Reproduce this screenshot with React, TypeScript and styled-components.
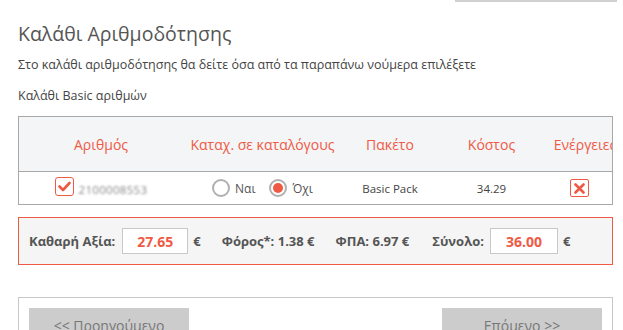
import React from "react";
import styled, { createGlobalStyle } from "styled-components";

const Global = createGlobalStyle`
  html, body { margin: 0; padding: 0; background: #fff; }
  body { font-family: "Open Sans", "Noto Sans", sans-serif; color: #555; }
  * { box-sizing: border-box; }
`;

const RED = "#ef5a45";

const Page = styled.div`
  width: 623px;
  height: 330px;
  overflow: hidden;
  padding: 0 10px 0 18px;
`;

const TopRow = styled.div`
  display: flex;
  justify-content: flex-end;
  height: 2px;
`;

const TopInput = styled.div`
  width: 162px;
  height: 2px;
  border-bottom: 2px solid #d0d0d0;
  margin-right: -4px;
`;

const Title = styled.h2`
  margin: 19px 0 0;
  font-size: 19.5px;
  font-weight: 400;
  line-height: 26px;
  color: #555;
`;

const Subtitle = styled.p`
  margin: 9px 0 0;
  font-size: 12.5px;
  line-height: 18px;
  color: #444;
`;

const SectionLabel = styled.p`
  margin: 13px 0 0;
  font-size: 12.5px;
  line-height: 18px;
  color: #444;
`;

const TableWrap = styled.div`
  margin-top: 11px;
  width: 595px;
  border: 1px solid #a8a8a8;
  overflow: hidden;
`;

const Grid = styled.div`
  display: grid;
  grid-template-columns: 164px 159px 96px 107px 80px;
  width: 606px;
`;

const HeadCell = styled.div`
  background: #f4f5f7;
  height: 55px;
  display: flex;
  align-items: center;
  justify-content: center;
  color: ${RED};
  font-size: 14px;
  white-space: nowrap;
  border-bottom: 1px solid #a8a8a8;
`;

const Cell = styled.div`
  height: 32px;
  display: flex;
  align-items: center;
  justify-content: center;
  font-size: 11.5px;
  color: #444;
  white-space: nowrap;
`;

const Check = styled.span`
  width: 19px;
  height: 19px;
  border: 1.5px solid ${RED};
  border-radius: 3px;
  display: inline-flex;
  align-items: center;
  justify-content: center;
  margin-right: 5px;
  margin-top: -4px;
`;

const Blurred = styled.span`
  filter: blur(1.3px);
  color: #888;
  font-size: 11.5px;
  letter-spacing: 0.3px;
  margin-top: 3px;
`;

const Radio = styled.span<{ $on?: boolean }>`
  width: 18px;
  height: 18px;
  border-radius: 50%;
  border: 2px solid #b0b0b0;
  display: inline-flex;
  align-items: center;
  justify-content: center;
  margin-right: 5px;
  &::after {
    content: "";
    width: 10px;
    height: 10px;
    border-radius: 50%;
    background: ${(p) => (p.$on ? RED : "transparent")};
  }
`;

const RadioLabel = styled.span`
  font-size: 12px;
  color: #555;
  margin-right: 14px;
  &:last-child { margin-right: 0; }
`;

const XBox = styled.span`
  width: 19px;
  height: 18px;
  border: 1.5px solid ${RED};
  border-radius: 2px;
  display: inline-flex;
  align-items: center;
  justify-content: center;
  margin-left: -11px;
`;

const Summary = styled.div`
  margin-top: 12px;
  width: 595px;
  height: 48px;
  border: 1.5px solid ${RED};
  background: #f5f5f5;
  display: flex;
  align-items: center;
  padding-left: 10px;
  font-weight: 700;
  font-size: 13px;
  color: #555;
`;

const SumLabel = styled.span<{ $gap: number }>`
  margin-right: ${(p) => p.$gap}px;
`;

const ValueBox = styled.span<{ $w: number }>`
  width: ${(p) => p.$w}px;
  height: 26px;
  border: 1px solid #c8c8c8;
  background: #fff;
  display: inline-flex;
  align-items: center;
  justify-content: center;
  color: ${RED};
  font-size: 14px;
  margin-right: 5px;
`;

const Euro = styled.span<{ $gap: number }>`
  margin-right: ${(p) => p.$gap}px;
`;

const Stat = styled.span<{ $gap: number }>`
  margin-right: ${(p) => p.$gap}px;
`;

const Footer = styled.div`
  margin-top: 32px;
  width: 595px;
  height: 60px;
  border: 1px solid #c8c8c8;
  display: flex;
  justify-content: space-between;
  align-items: flex-start;
  padding: 10px 10px 0 10px;
`;

const NavButton = styled.button`
  width: 160px;
  height: 36px;
  background: #cccccc;
  border: none;
  color: #777;
  font-family: "Open Sans", sans-serif;
  font-size: 14px;
  line-height: 36px;
  padding: 0;
`;

export default function App() {
  return (
    <>
      <Global />
      <Page>
        <TopRow>
          <TopInput />
        </TopRow>
        <Title>Καλάθι Αριθμοδότησης</Title>
        <Subtitle>Στο καλάθι αριθμοδότησης θα δείτε όσα από τα παραπάνω νούμερα επιλέξετε</Subtitle>
        <SectionLabel>Καλάθι Basic αριθμών</SectionLabel>
        <TableWrap>
          <Grid>
            <HeadCell>Αριθμός</HeadCell>
            <HeadCell>Καταχ. σε καταλόγους</HeadCell>
            <HeadCell>Πακέτο</HeadCell>
            <HeadCell>Κόστος</HeadCell>
            <HeadCell>Ενέργειες</HeadCell>
            <Cell>
              <Check>
                <svg width="13" height="11" viewBox="0 0 13 11">
                  <path d="M1.5 5.5 L5 9 L11.5 2" stroke={RED} strokeWidth="2.6" fill="none" strokeLinecap="round" strokeLinejoin="round" />
                </svg>
              </Check>
              <Blurred>2100008553</Blurred>
            </Cell>
            <Cell>
              <Radio />
              <RadioLabel>Ναι</RadioLabel>
              <Radio $on />
              <RadioLabel>Όχι</RadioLabel>
            </Cell>
            <Cell>Basic Pack</Cell>
            <Cell>34.29</Cell>
            <Cell>
              <XBox>
                <svg width="11" height="11" viewBox="0 0 11 11">
                  <path d="M1.5 1.5 L9.5 9.5 M9.5 1.5 L1.5 9.5" stroke={RED} strokeWidth="2.6" strokeLinecap="round" />
                </svg>
              </XBox>
            </Cell>
          </Grid>
        </TableWrap>
        <Summary>
          <SumLabel $gap={7}>Καθαρή Αξία:</SumLabel>
          <ValueBox $w={66}>27.65</ValueBox>
          <Euro $gap={21}>€</Euro>
          <Stat $gap={21}>Φόρος*: 1.38 €</Stat>
          <Stat $gap={23}>ΦΠΑ: 6.97 €</Stat>
          <SumLabel $gap={6}>Σύνολο:</SumLabel>
          <ValueBox $w={68}>36.00</ValueBox>
          <Euro $gap={0}>€</Euro>
        </Summary>
        <Footer>
          <NavButton>&lt;&lt; Προηγούμενο</NavButton>
          <NavButton>Επόμενο &gt;&gt;</NavButton>
        </Footer>
      </Page>
    </>
  );
}
